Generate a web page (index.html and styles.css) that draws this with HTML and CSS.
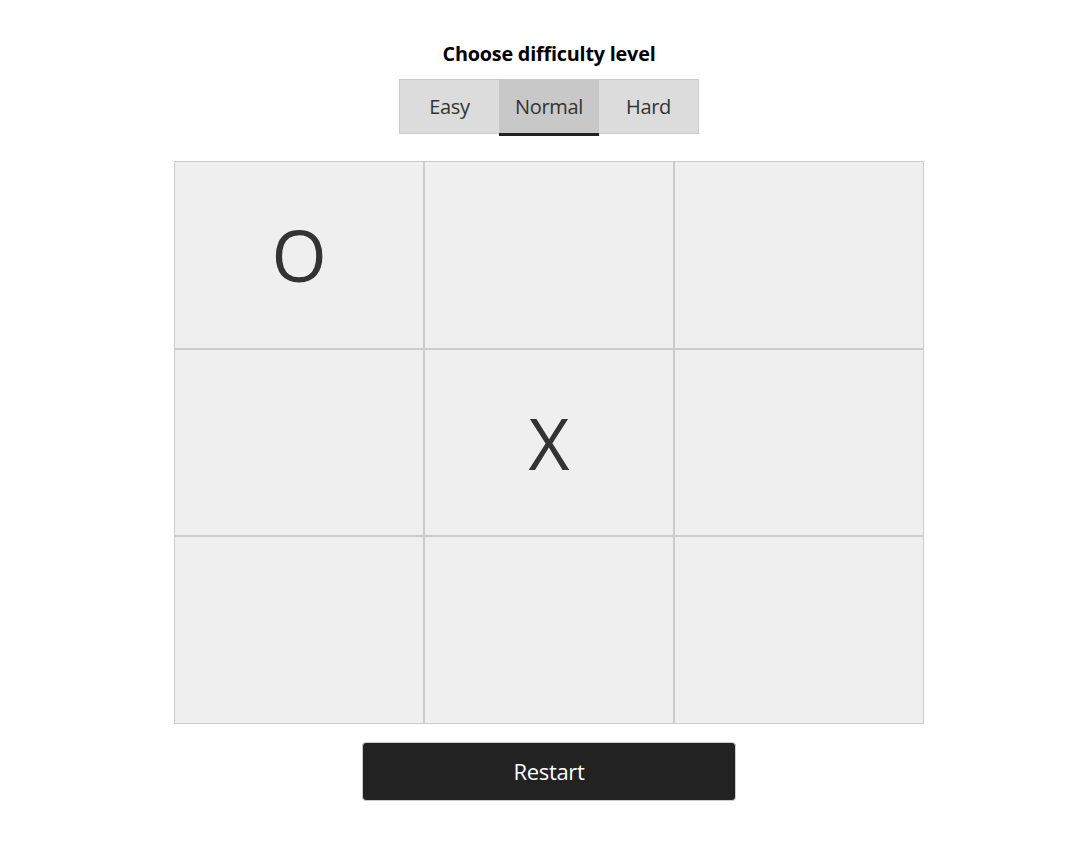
FILE: index.html
```html
<!DOCTYPE html>
<html lang="en">
<head>
<meta charset="utf-8">
<title>Tic Tac Toe</title>
<link rel="stylesheet" href="styles.css">
</head>
<body>
<main class="app">
  <h1 class="title">Choose difficulty level</h1>
  <div class="levels">
    <button class="level first">Easy</button>
    <button class="level active">Normal</button>
    <button class="level last">Hard</button>
  </div>
  <div class="board">
    <div class="cell">O</div>
    <div class="cell"></div>
    <div class="cell"></div>
    <div class="cell"></div>
    <div class="cell">X</div>
    <div class="cell"></div>
    <div class="cell"></div>
    <div class="cell"></div>
    <div class="cell"></div>
  </div>
  <button class="restart">Restart</button>
</main>
</body>
</html>
```

FILE: styles.css
```css
html, body {
  margin: 0;
  padding: 0;
  background: #ffffff;
}
body {
  font-family: "Open Sans", "Noto Sans", sans-serif;
  color: #333333;
  padding-left: 18px;
}
.app {
  display: flex;
  flex-direction: column;
  align-items: center;
  padding-top: 41px;
}
.title {
  margin: 0;
  font-size: 19.8px;
  font-weight: 700;
  color: #000000;
  line-height: 26px;
  letter-spacing: -0.2px;
}
.levels {
  display: flex;
  align-items: flex-start;
  margin-top: 12px;
}
.level {
  box-sizing: border-box;
  width: 100px;
  height: 55px;
  border: 1px solid #cccccc;
  border-left: none;
  border-right: none;
  background: #dcdcdc;
  font-family: inherit;
  font-size: 20px;
  color: #333333;
  padding: 0;
  letter-spacing: -0.3px;
  cursor: pointer;
}
.level.first {
  border-left: 1px solid #cccccc;
}
.level.last {
  border-right: 1px solid #cccccc;
}
.level.active {
  height: 57px;
  background: #c8c8c8;
  border-top-color: #c8c8c8;
  border-bottom: 3px solid #222222;
}
.board {
  margin-top: 25px;
  display: grid;
  grid-template-columns: repeat(3, 250px);
  grid-template-rows: repeat(3, 187.6px);
}
.cell {
  background: #efefef;
  border: 1px solid #cccccc;
  display: flex;
  align-items: center;
  justify-content: center;
  font-size: 71px;
  color: #333333;
  line-height: 1;
}
.restart {
  margin-top: 18px;
  width: 374px;
  height: 59px;
  background: #222222;
  color: #ffffff;
  border: 1px solid #cccccc;
  border-radius: 4px;
  font-family: inherit;
  font-size: 22px;
  letter-spacing: -0.3px;
  cursor: pointer;
}
```
